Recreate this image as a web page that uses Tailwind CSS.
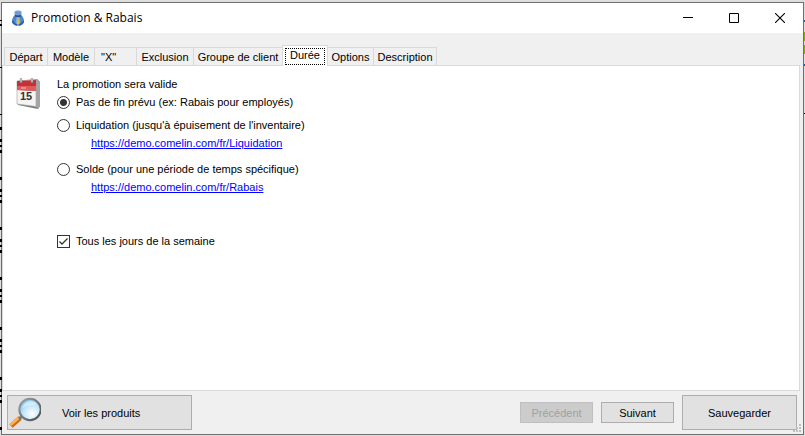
<!DOCTYPE html>
<html lang="fr">
<head>
<meta charset="utf-8">
<title>Promotion &amp; Rabais</title>
<script src="https://cdn.jsdelivr.net/npm/@tailwindcss/browser@4"></script>
</head>
<body class="h-screen overflow-hidden bg-[#dedede] grid grid-cols-[1px_1fr_1px] pt-[2px] pb-px font-['Liberation_Sans',Arial,sans-serif] text-[11px] leading-[14px] text-black">
<svg class="relative z-10 overflow-visible w-px h-full" aria-hidden="true">
  <defs><pattern id="dots" width="2" height="50" y="125" patternUnits="userSpaceOnUse"><path d="M0 0h2v3H0zM0 12h2v3H0zM0 18h2v2H0zM0 23h2v3H0z"/></pattern></defs>
  <rect y="120" width="2" height="308" fill="url(#dots)"/>
  <path d="M0 18h2v1H0zM0 22h2v2H0zM0 65h2v1H0zM0 112h2v1H0z"/>
</svg>
<main class="min-w-0 flex flex-col border border-[#6e6e6e] bg-[#f0f0f0]">
  <header class="h-[30px] shrink-0 bg-white flex items-center pl-2">
    <svg class="size-4 shrink-0" viewBox="0 0 16 16" aria-hidden="true">
      <path d="M5 5Q8 3.500 11 5Q14.500 8 14 12.500Q13 15.500 8 15.700Q3 15.500 2 12.500Q1.500 8 5 5z" fill="#4f84c6"/>
      <path d="M4.500 1.500Q8 -.5 11.500 1.500L11.500 4.500Q8 6.500 4.500 4.500z" fill="#6f9bd6"/>
      <path d="M4.500 4.500Q8 6.500 11.500 4.500L10.500 7H5.500z" fill="#244f91"/>
      <path d="M6.500 7Q5 11 6 14.800H10Q11 11 9.500 7z" fill="#7fa9da"/>
      <path d="M8 7.500Q10 11 9 14H7Q6.500 12 8 7.500z" fill="#e8c52c"/>
      <path d="M2.500 11Q4 14.500 7 15M13.500 11Q12 14.500 9 15" fill="none" stroke="#2a5fa8" stroke-width="1.300"/>
    </svg>
    <h1 class="ml-[5px] flex-1 font-['Open_Sans','Noto_Sans',sans-serif] text-[12px]">Promotion &amp; Rabais</h1>
    <button type="button" class="w-[46px] h-full grid place-items-center" aria-label="Réduire"><svg class="size-[10px]" viewBox="0 0 10 10"><path d="M0 4h10v1H0z"/></svg></button>
    <button type="button" class="w-[46px] h-full grid place-items-center" aria-label="Agrandir"><svg class="size-[10px]" viewBox="0 0 10 10"><path d="M.5.500h9v9h-9z" fill="none" stroke="#000"/></svg></button>
    <button type="button" class="w-[46px] h-full grid place-items-center" aria-label="Fermer"><svg class="size-[10px]" viewBox="0 0 10 10"><path d="M0 0l10 10M10 0L0 10" stroke="#000" stroke-width="1.100"/></svg></button>
  </header>
  <div role="tablist" class="flex items-end pl-[2px] pt-3 h-[32px] shrink-0">
    <button type="button" role="tab" aria-selected="false" class="h-[18px] w-[43px] border border-b-0 border-r-0 border-[#d9d9d9] whitespace-nowrap">Départ</button>
    <button type="button" role="tab" aria-selected="false" class="h-[18px] w-[47px] border border-b-0 border-r-0 border-[#d9d9d9] whitespace-nowrap">Modèle</button>
    <button type="button" role="tab" aria-selected="false" class="h-[18px] w-[42px] border border-b-0 border-r-0 border-[#d9d9d9] whitespace-nowrap pl-[6px] text-left">"X"</button>
    <button type="button" role="tab" aria-selected="false" class="h-[18px] w-[57px] border border-b-0 border-r-0 border-[#d9d9d9] whitespace-nowrap">Exclusion</button>
    <button type="button" role="tab" aria-selected="false" class="h-[18px] w-[89px] border border-b-0 border-r-0 border-[#d9d9d9] whitespace-nowrap">Groupe de client</button>
    <button type="button" role="tab" aria-selected="true" class="relative z-10 h-[21px] -mb-px w-[46px] border border-b-0 border-[#d9d9d9] bg-white p-[2px] whitespace-nowrap"><span class="block h-[17px] leading-3 border border-dotted border-black">Durée</span></button>
    <button type="button" role="tab" aria-selected="false" class="h-[18px] w-[45px] border border-b-0 border-x-0 border-[#d9d9d9] whitespace-nowrap">Options</button>
    <button type="button" role="tab" aria-selected="false" class="h-[18px] w-[64px] border border-b-0 border-[#d9d9d9] whitespace-nowrap">Description</button>
  </div>
  <section role="tabpanel" class="flex-1 min-h-0 mr-[3px] border border-[#d9d9d9] bg-white flex items-start pl-[13px] pt-[11px]">
    <svg class="w-[26px] h-[33px] shrink-0" viewBox="0 0 26 33" aria-hidden="true">
      <path d="M2 4L21 2L24 5V29L22 32L2 28z" fill="#777"/>
      <path d="M21 2L24 5V29L22 32L19 29V3z" fill="#a4a4a4"/>
      <path d="M1 4L20 2.500V29.500L1 27z" fill="#f4f4f4" stroke="#aaa" stroke-width=".7"/>
      <path d="M1 4L20 3V14L1 13z" fill="#c92f35"/>
      <path d="M1 9L20 9V14L1 13z" fill="#df5b5e"/>
      <path d="M5 1v5M16 1v5" stroke="#888" stroke-width="2.200"/><path d="M5 1v4M16 1v4" stroke="#ddd"/>
      <path d="M5 11h5" stroke="#f4c0c0"/>
      <text x="4" y="23" font-family="Liberation Sans" font-size="11" font-weight="700" fill="#333">15</text>
    </svg>
    <form class="ml-[15px]">
      <fieldset>
        <legend>La promotion sera valide</legend>
        <label class="flex items-center gap-[6px] mt-1"><input type="radio" name="duree" checked class="appearance-none size-[13px] rounded-full border border-[#333] bg-white checked:bg-[radial-gradient(circle,#333_3px,#fff_4px)]">Pas de fin prévu (ex: Rabais pour employés)</label>
        <label class="flex items-center gap-[6px] mt-[9px]"><input type="radio" name="duree" class="appearance-none size-[13px] rounded-full border border-[#333] bg-white checked:bg-[radial-gradient(circle,#333_3px,#fff_4px)]">Liquidation (jusqu'à épuisement de l'inventaire)</label>
        <a href="#liquidation" class="block w-fit ml-[34px] mt-1 text-[#0000ff] underline">https://demo.comelin.com/fr/Liquidation</a>
        <label class="flex items-center gap-[6px] mt-3"><input type="radio" name="duree" class="appearance-none size-[13px] rounded-full border border-[#333] bg-white checked:bg-[radial-gradient(circle,#333_3px,#fff_4px)]">Solde (pour une période de temps spécifique)</label>
        <a href="#rabais" class="block w-fit ml-[34px] mt-1 text-[#0000ff] underline">https://demo.comelin.com/fr/Rabais</a>
      </fieldset>
      <label class="flex items-center gap-[6px] mt-10"><span class="grid"><input type="checkbox" checked class="peer col-start-1 row-start-1 appearance-none size-[13px] border border-[#333] bg-white"><svg class="col-start-1 row-start-1 size-[13px] invisible peer-checked:visible pointer-events-none" viewBox="0 0 13 13"><path d="M2.500 6.500L5 9L10.500 3.500" fill="none" stroke="#333" stroke-width="1.300"/></svg></span>Tous les jours de la semaine</label>
    </form>
  </section>
  <footer class="relative shrink-0 h-[43px] pl-[5px] pr-[6px] pt-1 flex items-start">
    <button type="button" class="w-[185px] h-[35px] border border-[#adadad] bg-[#e1e1e1] flex items-center">
      <svg class="size-[33px]" viewBox="0 0 33 33" aria-hidden="true">
        <defs>
          <radialGradient id="lens" cx=".6" cy=".7" r=".8"><stop offset="0" stop-color="#fff"/><stop offset=".5" stop-color="#c3e7fa"/><stop offset="1" stop-color="#6fb7e6"/></radialGradient>
          <linearGradient id="rim" x2="1" y2="1"><stop stop-color="#9aa5aa"/><stop offset="1" stop-color="#454c50"/></linearGradient>
        </defs>
        <path d="M3 30L12 22" stroke="#d0690f" stroke-width="5"/><path d="M2.500 29L11 21.500" stroke="#ffb45c" stroke-width="2.500"/>
        <path d="M11 23L14 20" stroke="#777" stroke-width="3"/>
        <circle cx="22" cy="13.500" r="10.700" fill="url(#lens)" stroke="url(#rim)" stroke-width="2"/>
        <path d="M14 12Q16 6 22 5Q27 5 29 9Q21 8 14 12z" fill="#fff" opacity=".45"/>
      </svg>
      <span class="ml-[21px]">Voir les produits</span>
    </button>
    <div class="ml-auto flex items-center gap-2">
      <button type="button" disabled class="w-[73px] h-[21px] border border-[#bfbfbf] bg-[#cccccc] text-[#a0a0a0]">Précédent</button>
      <button type="button" class="w-[73px] h-[21px] border border-[#adadad] bg-[#e1e1e1]">Suivant</button>
      <button type="button" class="w-[115px] h-[35px] border border-[#adadad] bg-[#e1e1e1]">Sauvegarder</button>
    </div>
    <svg class="absolute right-[2px] bottom-[2px] size-[8px]" viewBox="0 0 8 8" aria-hidden="true"><path d="M6 0h2v2H6zM3 3h2v2H3zM6 3h2v2H6zM0 6h2v2H0zM3 6h2v2H3zM6 6h2v2H6z" fill="#bfbfbf"/></svg>
  </footer>
</main>
<svg class="w-px h-full" aria-hidden="true"><path d="M0 18h1v2H0zM0 62h1v2H0z" fill="#0069b4"/><path d="M0 30h1v9H0zM0 43h1v9H0z" fill="#86b000"/><path d="M0 111h1v1H0z"/></svg>
</body>
</html>
